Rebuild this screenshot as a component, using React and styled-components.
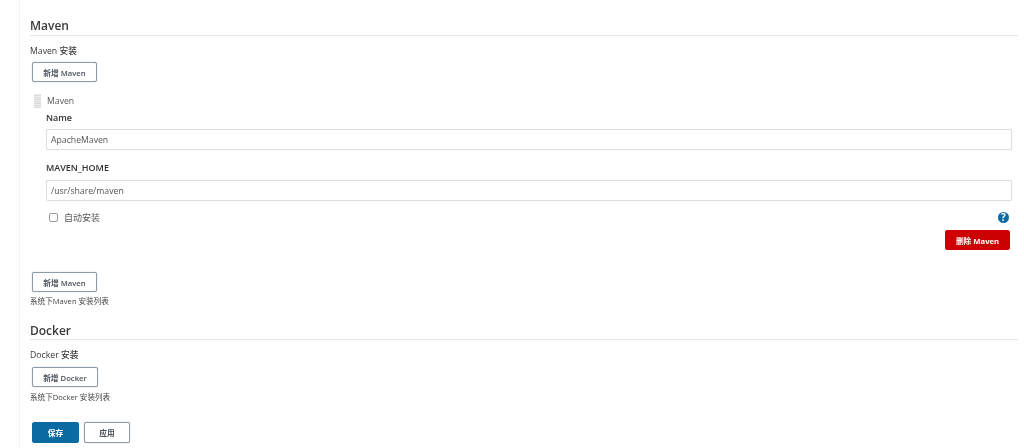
import React from 'react';
import styled, { createGlobalStyle } from 'styled-components';

const GlobalStyle = createGlobalStyle`
  html, body { margin: 0; padding: 0; background: #fff; }
  body {
    font-family: "Open Sans", "Noto Sans CJK SC", sans-serif;
    color: #333;
    overflow: hidden;
  }
`;

const Page = styled.div`
  box-sizing: border-box;
  width: 1005px;
  height: 448px;
  margin-left: 19px;
  padding: 0 6px 0 10px;
  overflow: hidden;
  border-left: 1px solid #f3f3f3;
  filter: blur(0.35px);
`;

const Section = styled.section`
  display: flex;
  flex-direction: column;
`;

const Heading = styled.h2`
  box-sizing: border-box;
  height: 19px;
  margin: ${p => p.$top}px 0 0;
  padding-top: ${p => p.$shift || 0}px;
  line-height: 17px;
  font-size: 12px;
  font-weight: 600;
  color: #3a3a3a;
  border-bottom: 1px solid #e6e6e6;
`;

const GroupLabel = styled.div`
  margin-top: 9px;
  font-size: 8.7px;
  line-height: 12px;
  font-weight: 500;
  color: #3a3a3a;
`;

const Button = styled.button`
  box-sizing: border-box;
  width: ${p => p.$w}px;
  height: 20px;
  padding: 0;
  font-family: inherit;
  font-size: 7.7px;
  font-weight: 600;
  color: #4d545d;
  background: #fff;
  border: 1px solid #8d9aa8;
  border-radius: 2px;
  box-shadow: 0 0 1px #8d9aa8;
`;

const AddRow = styled.div`
  margin: ${p => p.$top}px 0 0 2px;
  display: flex;
`;

const Repeated = styled.div`
  margin-top: 12px;
  padding-left: 4px;
  display: flex;
  flex-direction: column;
`;

const ItemHead = styled.div`
  display: flex;
  align-items: center;
  gap: 6px;
  height: 14px;
  font-size: 8.7px;
  color: #5a5a5a;
`;

const Handle = styled.div`
  width: 7px;
  height: 14px;
  background-image: repeating-linear-gradient(0deg, #d8d8d8 0 1px, #efefef 1px 2px);
`;

const Fields = styled.div`
  padding-left: 12px;
  display: flex;
  flex-direction: column;
`;

const FieldLabel = styled.label`
  display: block;
  margin-top: ${p => p.$top}px;
  font-size: 9px;
  line-height: 12px;
  font-weight: 600;
  color: #333;
`;

const Input = styled.input`
  box-sizing: border-box;
  display: block;
  width: 966px;
  height: 21px;
  margin-top: ${p => p.$top}px;
  padding: 0 4px;
  font-family: inherit;
  font-size: 8.7px;
  color: #555;
  background: #fff;
  border: 1px solid #dcdedf;
  border-radius: 2px;
  box-shadow: 0 0 1px #dcdedf;
  outline: none;
`;

const CheckRow = styled.div`
  margin-top: 10px;
  display: flex;
  align-items: center;
  width: 966px;
  height: 13px;
`;

const Check = styled.span`
  box-sizing: border-box;
  width: 9px;
  height: 9px;
  margin-left: 3px;
  border: 1px solid #9a9a9a;
  border-radius: 2px;
`;

const CheckText = styled.span`
  flex: 1;
  margin-left: 6px;
  font-size: 9px;
  color: #555;
`;

const Help = styled.span`
  display: flex;
  align-items: center;
  justify-content: center;
  width: 11px;
  height: 11px;
  margin-right: 3px;
  border-radius: 50%;
  background: #0b6aa2;
  color: #fff;
  font-size: 10px;
  font-weight: 700;
  line-height: 11px;
`;

const DeleteRow = styled.div`
  display: flex;
  justify-content: flex-end;
  width: 964px;
  margin-top: 6px;
`;

const DeleteButton = styled(Button)`
  background: #cc0003;
  border-color: #cc0003;
  box-shadow: none;
  color: #fff;
  font-weight: 700;
`;

const Hint = styled.div`
  margin-top: ${p => p.$top}px;
  font-size: 7.6px;
  line-height: 11px;
  color: #444;
`;

const Actions = styled.div`
  display: flex;
  gap: 5px;
  margin: 19px 0 0 2px;

  button { height: 21px; }
`;

const SaveButton = styled(Button)`
  background: #0b6aa2;
  border-color: #0b6aa2;
  box-shadow: none;
  color: #fff;
  font-weight: 700;
`;

export default function App() {
  return (
    <Page>
      <GlobalStyle />
      <Section>
        <Heading $top={17}>Maven</Heading>
        <GroupLabel>Maven 安装</GroupLabel>
        <AddRow $top={5}><Button $w={65}>新增 Maven</Button></AddRow>
        <Repeated>
          <ItemHead><Handle />Maven</ItemHead>
          <Fields>
            <FieldLabel $top={4}>Name</FieldLabel>
            <Input $top={5} readOnly value="ApacheMaven" />
            <FieldLabel $top={12}>MAVEN_HOME</FieldLabel>
            <Input $top={6} readOnly value="/usr/share/maven" />
            <CheckRow>
              <Check />
              <CheckText>自动安装</CheckText>
              <Help>?</Help>
            </CheckRow>
            <DeleteRow><DeleteButton $w={65}>删除 Maven</DeleteButton></DeleteRow>
          </Fields>
        </Repeated>
        <AddRow $top={22}><Button $w={65}>新增 Maven</Button></AddRow>
        <Hint $top={4}>系统下Maven 安装列表</Hint>
      </Section>
      <Section>
        <Heading $top={14} $shift={1}>Docker</Heading>
        <GroupLabel>Docker 安装</GroupLabel>
        <AddRow $top={6}><Button $w={66}>新增 Docker</Button></AddRow>
        <Hint $top={5}>系统下Docker 安装列表</Hint>
      </Section>
      <Actions>
        <SaveButton $w={47}>保存</SaveButton>
        <Button $w={46}>应用</Button>
      </Actions>
    </Page>
  );
}
